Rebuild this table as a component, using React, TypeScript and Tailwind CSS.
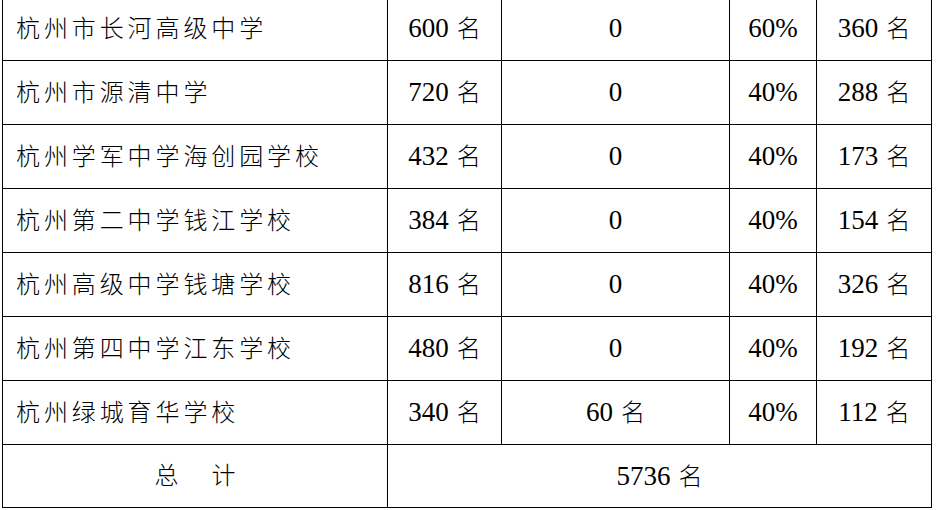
const rows: [string, string, string, string, string][] = [
  ["杭州市长河高级中学", "600 名", "0", "60%", "360 名"],
  ["杭州市源清中学", "720 名", "0", "40%", "288 名"],
  ["杭州学军中学海创园学校", "432 名", "0", "40%", "173 名"],
  ["杭州第二中学钱江学校", "384 名", "0", "40%", "154 名"],
  ["杭州高级中学钱塘学校", "816 名", "0", "40%", "326 名"],
  ["杭州第四中学江东学校", "480 名", "0", "40%", "192 名"],
  ["杭州绿城育华学校", "340 名", "60 名", "40%", "112 名"],
];

const cell = "border border-black text-center align-middle p-0";
const cjk = "text-[24px] font-light";

// numbers are set larger than the Chinese unit, as in the original document
const Num = ({ v }: { v: string }) => {
  const [n, unit] = v.split(" ");
  return (
    <>
      <span>{n}</span>
      {unit && <span className={`${cjk} ml-[8px]`}>{unit}</span>}
    </>
  );
};

export default function App() {
  return (
    <div
      className="h-[510px] w-[936px] overflow-hidden bg-white pl-[2px] text-[27px] leading-none text-black"
      style={{ fontFamily: '"Liberation Serif", "Noto Sans CJK SC", serif' }}
    >
      <table className="-mt-[4px] w-[930px] table-fixed border-collapse">
        <colgroup>
          <col className="w-[385px]" />
          <col className="w-[114px]" />
          <col className="w-[228px]" />
          <col className="w-[87px]" />
          <col className="w-[115px]" />
        </colgroup>
        <tbody>
          {rows.map((r) => (
            <tr key={r[0]} className="h-[64px]">
              <td
                className={`border border-black p-0 pl-[13px] text-left align-middle tracking-[3.9px] ${cjk}`}
              >
                {r[0]}
              </td>
              <td className={cell}>
                <Num v={r[1]} />
              </td>
              <td className={cell}>
                <Num v={r[2]} />
              </td>
              <td className={cell}>{r[3]}</td>
              <td className={cell}>
                <Num v={r[4]} />
              </td>
            </tr>
          ))}
          <tr className="h-[63px]">
            <td className={`${cell} ${cjk}`}>
              <span className="mr-[33px]">总</span>
              <span>计</span>
            </td>
            <td className={cell} colSpan={4}>
              <Num v="5736 名" />
            </td>
          </tr>
        </tbody>
      </table>
    </div>
  );
}
